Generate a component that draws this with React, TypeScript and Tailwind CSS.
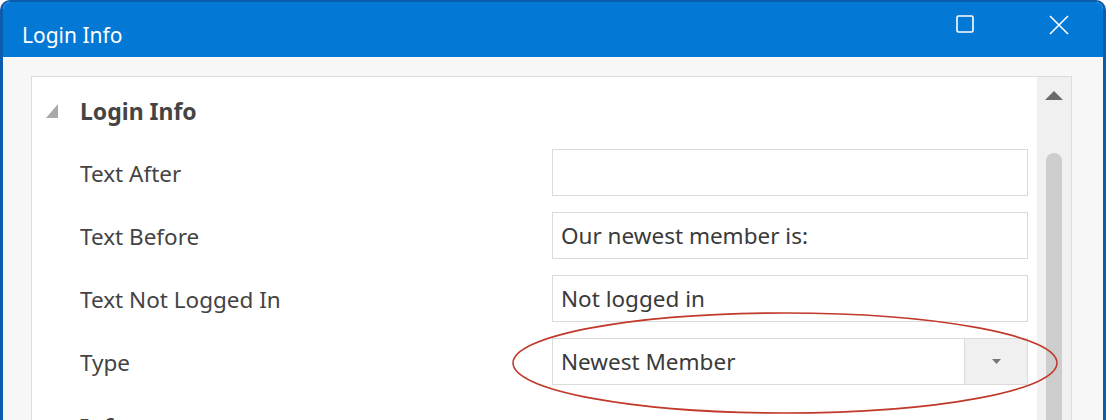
import React from "react";

const font = { fontFamily: '"Noto Sans", "Open Sans", sans-serif' };

function Row({ label, value, select }: { label: string; value?: string; select?: boolean }) {
  return (
    <div className="flex h-[63px] items-start">
      <div className="w-[520px] pl-[48px] pt-[3px] h-[55px] flex items-center text-[22.5px] text-[#444]">{label}</div>
      {select ? (
        <div className="mt-[4px] flex h-[47px] w-[476px] border border-[#dadada] bg-white">
          <div className="flex-1 flex items-center pl-[8px] text-[22.5px] text-[#3a3a3a]">{value}</div>
          <div className="w-[63px] h-full border-l border-[#dadada] bg-[#f0f0f0] flex items-center justify-center">
            <svg width="9" height="5" viewBox="0 0 9 5"><path d="M0 0 L9 0 L4.5 5 Z" fill="#777" /></svg>
          </div>
        </div>
      ) : (
        <div className="mt-[4px] flex h-[47px] w-[476px] items-center border border-[#dadada] bg-white pl-[8px] text-[22.5px] text-[#3a3a3a]">
          {value}
        </div>
      )}
    </div>
  );
}

export default function App() {
  return (
    <div className="relative w-[1106px] h-[420px] overflow-hidden bg-white" style={font}>
      <div className="h-[440px] rounded-t-[10px] border-x-[3px] border-t-[2px] border-[#0b5cad] bg-[#f7f7f7] overflow-hidden">
        <div className="flex h-[55px] items-start bg-[#0378d4] text-white">
          <div className="pl-[19px] pt-[19px] text-[21px] leading-[29px] flex-1">Login Info</div>
          <svg width="18" height="18" viewBox="0 0 18 18" className="mt-[13px] mr-[75px]">
            <rect x="1" y="1" width="16" height="16" rx="1.5" fill="none" stroke="white" strokeWidth="1.6" />
          </svg>
          <svg width="20" height="20" viewBox="0 0 20 20" className="mt-[13px] mr-[34px]">
            <path d="M1 1 L19 19 M19 1 L1 19" stroke="white" strokeWidth="1.6" />
          </svg>
        </div>
        <div className="pl-[28px] pr-[31px] pt-[19px]">
          <div className="flex h-[400px] border border-[#dcdcdc] bg-white">
            <div className="flex-1 flex flex-col">
              <div className="flex h-[68px] items-center">
                <svg width="12" height="14" viewBox="0 0 12 14" className="ml-[14px] mr-[22px]">
                  <path d="M12 0 L12 14 L0 14 Z" fill="#a8a8a8" />
                </svg>
                <div className="text-[23px] font-bold text-[#444]">Login Info</div>
              </div>
              <Row label="Text After" value="" />
              <Row label="Text Before" value="Our newest member is:" />
              <Row label="Text Not Logged In" value="Not logged in" />
              <Row label="Type" value="Newest Member" select />
              <div className="flex h-[40px] items-center pl-[48px] text-[23px] font-bold text-[#444] pt-[20px]">Info</div>
            </div>
            <div className="w-[34px] ml-[9px] bg-[#f0f0f0] flex flex-col items-center">
              <svg width="18" height="9" viewBox="0 0 18 9" className="mt-[14px]">
                <path d="M0 9 L9 0 L18 9 Z" fill="#6a6a6a" />
              </svg>
              <div className="mt-[53px] w-[16px] flex-1 rounded-t-full bg-[#cdcdcd]" />
            </div>
          </div>
        </div>
      </div>
      <svg className="absolute left-0 top-0 pointer-events-none" width="1106" height="420">
        <ellipse cx="785" cy="363" rx="272" ry="50" fill="none" stroke="#c0392b" strokeWidth="1.6" />
      </svg>
    </div>
  );
}
